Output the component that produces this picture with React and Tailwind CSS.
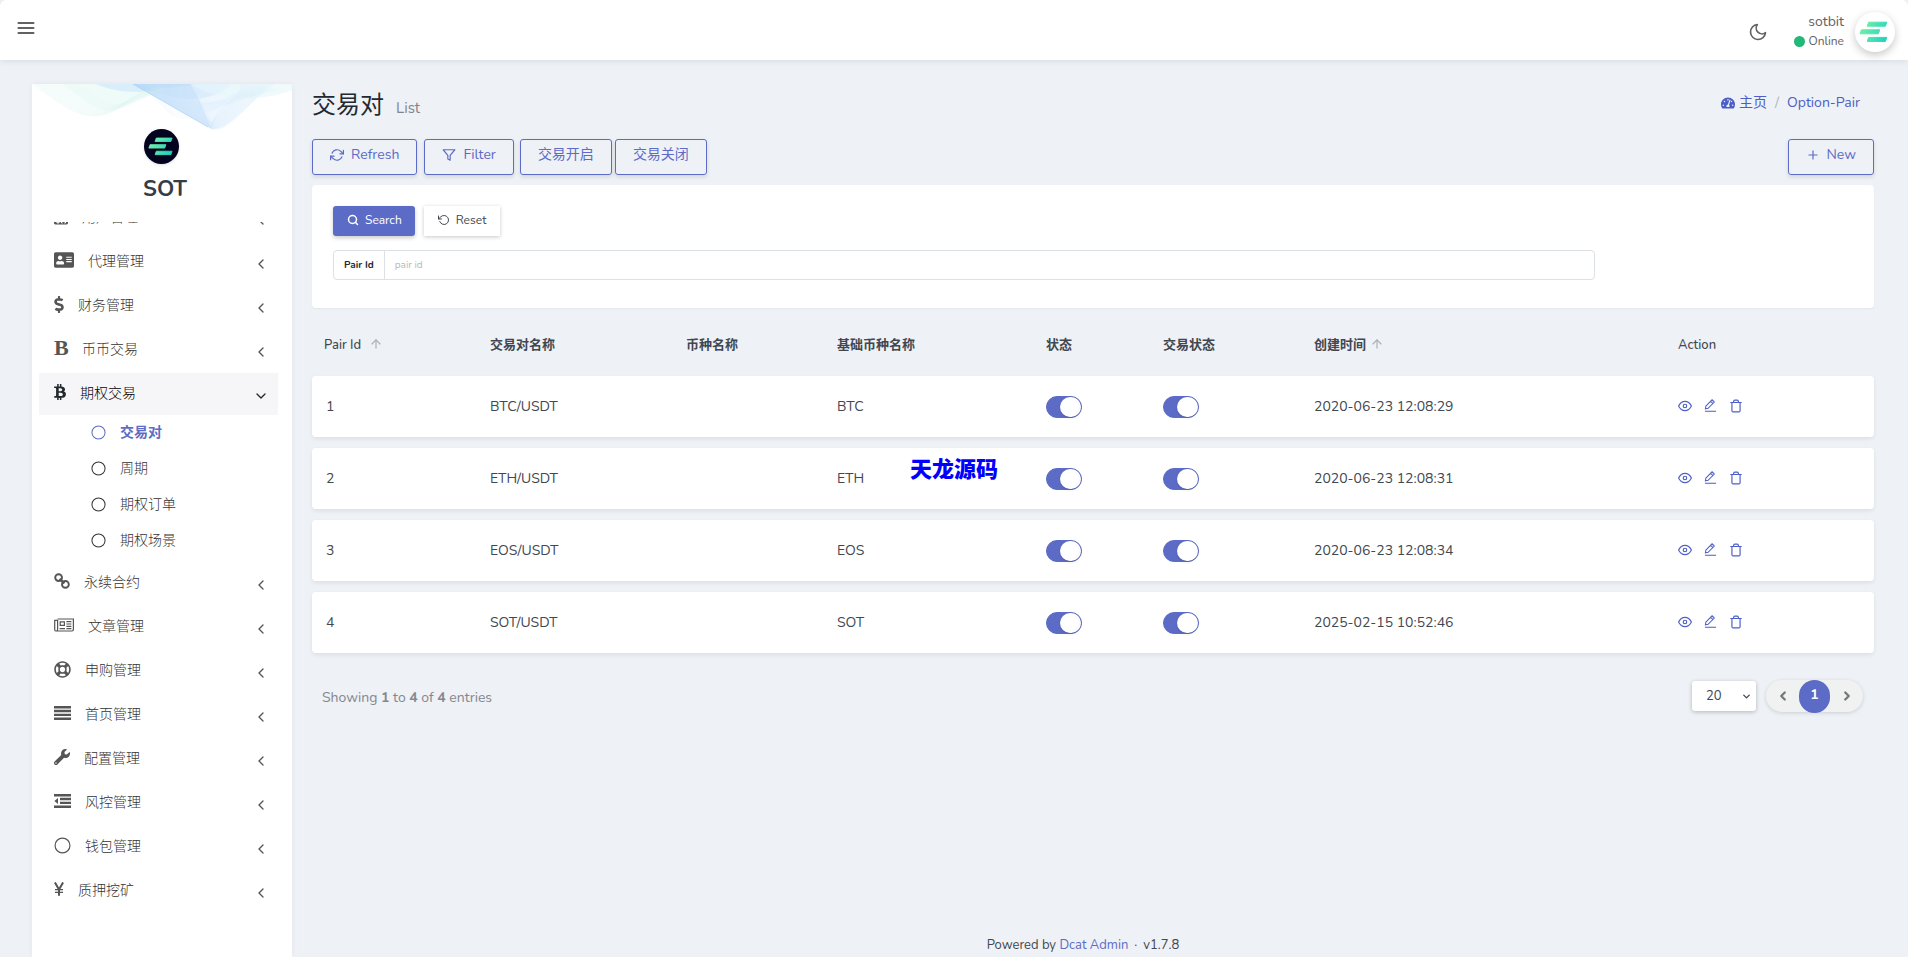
import React, { useState } from 'react'
import { FaAddressCard, FaBtc, FaDollarSign, FaRegLifeRing, FaTachometerAlt, FaUserMd, FaWrench } from 'react-icons/fa'
import {
  FiArrowUp,
  FiChevronDown,
  FiChevronLeft,
  FiChevronRight,
  FiEye,
  FiFilter,
  FiMenu,
  FiMoon,
  FiPlus,
  FiRefreshCw,
  FiRotateCcw,
  FiSearch,
  FiTrash,
} from 'react-icons/fi'

const CircleIcon = ({ className }) => (
  <svg viewBox="0 0 16 16" className={className} fill="none" stroke="currentColor" strokeWidth="1.1">
    <circle cx="8" cy="8" r="7" />
  </svg>
)

const ChainIcon = ({ className }) => (
  <svg viewBox="0 0 16 16" className={className} fill="none" stroke="currentColor" strokeWidth="1.9">
    <circle cx="4.6" cy="4.6" r="3.4" />
    <circle cx="11.4" cy="11.4" r="3.4" />
    <path d="M5.6 5.8l4.8 4.6" strokeWidth="2.4" />
  </svg>
)

const NewsIcon = ({ className }) => (
  <svg viewBox="0 0 20 14" className={className} fill="none" stroke="currentColor" strokeWidth="1.2">
    <path d="M3.6 1h15.8v10.6q0 1.4-1.4 1.4H2.2Q.7 13 .7 11.4V2.4h2.9v9q0 1.6-1.4 1.6" />
    <path d="M6.2 3.8h4.2v3.6H6.2z" />
    <path d="M12.4 3.6h5M12.4 6h5M12.4 8.4h5M5.6 10.6h5.4M12.4 10.6h5" />
  </svg>
)

const JustifyIcon = ({ className }) => (
  <svg viewBox="0 0 17 14" className={className} fill="currentColor">
    <path d="M0 0h17v2.4H0zM0 3.8h17v2.4H0zM0 7.7h17v2.4H0zM0 11.6h17V14H0z" />
  </svg>
)

const DedentIcon = ({ className }) => (
  <svg viewBox="0 0 17 14" className={className} fill="currentColor">
    <path d="M0 0h17v2.4H0zM6 3.8h11v2.4H6zM6 7.7h11v2.4H6zM0 11.6h17V14H0zM4 3.9V10L.4 7z" />
  </svg>
)

const YenIcon = ({ className }) => (
  <svg viewBox="0 0 10 14" className={className} fill="none" stroke="currentColor">
    <path d="M.9.4L5 7.4 9.1.4M5 7v6.8" strokeWidth="2" />
    <path d="M1 7.7h8M1 10.3h8" strokeWidth="1.2" />
  </svg>
)

const PencilIcon = ({ className }) => (
  <svg viewBox="0 0 14 14" className={className} fill="none" stroke="currentColor" strokeWidth="1.1">
    <path d="M1 13.3h12M2 7.6L8.7.9l2.4 2.4-6.7 6.7-2.9.6zM7.2 2.5l2.3 2.3" />
  </svg>
)

const LogoBars = ({ className }) => (
  <svg viewBox="0 0 30 22" className={className}>
    <defs>
      <linearGradient id="bars" gradientUnits="userSpaceOnUse" x1="0" y1="4" x2="30" y2="20">
        <stop offset="0" stopColor="#7ff0a4" />
        <stop offset="1" stopColor="#14d0c0" />
      </linearGradient>
    </defs>
    <g fill="url(#bars)" stroke="url(#bars)" strokeLinejoin="round">
      <path d="M9.6 1.2h18.2l-1.4 4H8.2z" />
      <path d="M2.4 8.8h18.3l-1.4 4H1z" />
      <path d="M9.6 16.4h18.2l-1.4 4H8.2z" />
    </g>
  </svg>
)

const steps = [0, 1, 2, 3, 4, 5, 6, 7, 8, 9, 10, 11]

const Waves = () => (
  <svg viewBox="0 0 260 48" className="w-full block" fill="none">
    <defs>
      <linearGradient id="sky" x1="0" x2="1">
        <stop offset="0" stopColor="#a3cdf6" />
        <stop offset="0.5" stopColor="#d8ebfc" />
        <stop offset="1" stopColor="#ecf8fc" />
      </linearGradient>
    </defs>
    <path d="M0 0C22 14 40 32 62 32C84 32 96 10 128 6L100 0z" fill="#e6faf4" opacity="0.3" />
    <path d="M30 0C48 12 62 27 78 26C96 25 110 12 132 8L104 0z" fill="#e0f7f3" opacity="0.35" />
    <path d="M64 0C84 9 112 10 128 5L172 0z" fill="#cfe8fb" opacity="0.7" />
    <path d="M101 0L176 43C181 47 188 46 194 42C212 30 226 10 242 0z" fill="url(#sky)" opacity="0.5" />
    <path d="M101 0L180 45C172 30 168 12 158 0z" fill="#a9d0f6" opacity="0.25" />
    <path d="M110 0C142 20 178 20 200 0z" fill="#bfdff9" opacity="0.35" />
    <path d="M158 0C190 20 236 16 260 6V0z" fill="#e6f7fa" opacity="0.6" />
    <path d="M101 0L176 43" stroke="#9cc8f4" strokeWidth="0.8" opacity="0.7" />
    {steps.map((i) => (
      <g key={i} strokeWidth="0.35" opacity="0.4">
        <path d={`M${i * 4} 0C${22 + i * 4} 14 ${40 + i * 3} ${32 - i} ${62 + i * 2} ${32 - i}S${100 + i} ${12 - i} 132 ${7 - i / 3}`} stroke="#d2f3ec" />
        <path d={`M${101 + i * 5} 0L180 ${45 - i / 2}C${196 - i} ${44 - i * 2} ${224 - i} 12 ${242 - i * 3} 0`} stroke="#b3d7f8" />
        <path d={`M${116 + i * 2} ${8 + i * 2}C160 ${22 + i * 2} 190 ${26 - i} ${214 + i * 3} ${i / 2}`} stroke="#cfe8fb" />
      </g>
    ))}
  </svg>
)

const menu = [
  { title: '用户管理', icon: <FaUserMd className="h-[17px] w-[14px]" /> },
  { title: '代理管理', icon: <FaAddressCard className="h-[18px] w-5" /> },
  { title: '财务管理', icon: <FaDollarSign className="h-[17px] w-[10px]" /> },
  { title: '币币交易', icon: <span className="block w-[14px] font-['Liberation_Serif',serif] text-[22px] leading-4 font-bold">B</span> },
  {
    title: '期权交易',
    icon: <FaBtc className="h-4 w-3" />,
    open: true,
    children: ['交易对', '周期', '期权订单', '期权场景'],
  },
  { title: '永续合约', icon: <ChainIcon className="h-4 w-4" /> },
  { title: '文章管理', icon: <NewsIcon className="h-[14px] w-5" /> },
  { title: '申购管理', icon: <FaRegLifeRing className="h-[17px] w-[17px]" /> },
  { title: '首页管理', icon: <JustifyIcon className="h-[14px] w-[17px]" /> },
  { title: '配置管理', icon: <FaWrench className="h-4 w-4" /> },
  { title: '风控管理', icon: <DedentIcon className="h-[14px] w-[17px]" /> },
  { title: '钱包管理', icon: <CircleIcon className="h-[17px] w-[17px]" /> },
  { title: '质押挖矿', icon: <YenIcon className="h-[14px] w-[10px]" /> },
]

const pairs = [
  { id: 1, name: 'BTC/USDT', base: 'BTC', created: '2020-06-23 12:08:29' },
  { id: 2, name: 'ETH/USDT', base: 'ETH', created: '2020-06-23 12:08:31' },
  { id: 3, name: 'EOS/USDT', base: 'EOS', created: '2020-06-23 12:08:34' },
  { id: 4, name: 'SOT/USDT', base: 'SOT', created: '2025-02-15 10:52:46' },
]

function OutlineButton({ icon, children, className = '' }) {
  return (
    <button
      className={`flex h-9 items-center gap-[7px] rounded-[3px] border border-[#5c6bc6] px-[17px] pb-1 text-sm text-[#5c6bc6] shadow-[0_2px_4px_rgba(0,0,0,0.12)] ${className}`}
    >
      {icon}
      {children}
    </button>
  )
}

function Toggle({ label }) {
  const [on, setOn] = useState(true)
  return (
    <input
      type="checkbox"
      aria-label={label}
      checked={on}
      onChange={() => setOn(!on)}
      className="block h-[22px] w-9 cursor-pointer appearance-none rounded-full border border-[#5c6bc6] bg-gray-200 before:block before:h-5 before:w-[21px] before:rounded-full before:bg-white before:shadow checked:bg-[#5c6bc6] checked:before:ml-auto"
    />
  )
}

function Sidebar() {
  return (
    <aside className="mt-6 ml-8 w-[260px] shrink-0 bg-white shadow-[0_0_6px_rgba(0,0,0,0.06)]">
      <div className="relative h-[138px]">
        <Waves />
        <a href="#home" className="absolute inset-x-0 top-[45px] flex flex-col items-center pr-[2px]">
          <span className="flex h-[35px] w-[35px] items-center justify-center rounded-full bg-[#03021f] shadow">
            <LogoBars className="w-[26px]" />
          </span>
          <span className="mt-[9px] pl-2 text-[22px] leading-8 font-bold text-[#343c47]">SOT</span>
        </a>
      </div>
      <nav className="overflow-hidden pr-[14px] pl-[7px]">
        <ul className="-mt-[25px]">
          {menu.map((item) => (
            <li key={item.title} className="mb-[2px]">
              <a
                href="#menu"
                className={`flex h-[42px] items-center pr-[9px] pl-[15px] text-sm font-light ${
                  item.open ? 'bg-[#f6f6f9] text-[#22292f]' : 'text-[#555]'
                }`}
              >
                <span className="pb-1">{item.icon}</span>
                <span className={`ml-[14px] ${item.open ? 'text-black' : 'text-[#333]'}`}>{item.title}</span>
                {item.open ? (
                  <FiChevronDown className="mt-1 ml-auto h-4 w-4" />
                ) : (
                  <FiChevronLeft className="mt-1 ml-auto h-4 w-4" />
                )}
              </a>
              {item.children && (
                <ul className="pb-px">
                  {item.children.map((child, i) => (
                    <li key={child}>
                      <a
                        href="#child"
                        className={`flex h-9 items-center pl-[52px] text-sm ${
                          i === 0 ? 'font-bold text-[#5c6bc6]' : 'font-light text-[#333]'
                        }`}
                      >
                        <CircleIcon className="mb-px h-[15px] w-[15px]" />
                        <span className="ml-[14px]">{child}</span>
                      </a>
                    </li>
                  ))}
                </ul>
              )}
            </li>
          ))}
        </ul>
      </nav>
    </aside>
  )
}

function PairTable() {
  return (
    <table className="mt-[6px] w-full table-fixed border-separate border-spacing-x-0 border-spacing-y-[11px] text-left text-sm text-[#414750]">
      <thead>
        <tr className="h-[40px] text-[13px] [&>th]:px-3 [&>th]:pt-px">
          <th className="w-[166px] font-medium">
            Pair Id <FiArrowUp className="mb-1 ml-1 inline h-[14px] w-[14px] text-[#a9b0b8]" />
          </th>
          <th className="w-[196px] font-bold">交易对名称</th>
          <th className="w-[151px] font-bold">币种名称</th>
          <th className="w-[209px] font-bold">基础币种名称</th>
          <th className="w-[117px] font-bold">状态</th>
          <th className="w-[151px] font-bold">交易状态</th>
          <th className="w-[364px] font-bold">
            创建时间 <FiArrowUp className="mb-1 inline h-[14px] w-[14px] text-[#a9b0b8]" />
          </th>
          <th className="w-[208px] font-medium">Action</th>
        </tr>
      </thead>
      <tbody>
        {pairs.map((pair) => (
          <tr
            key={pair.id}
            className="h-[61px] rounded-[4px] shadow-[0_2px_4px_rgba(0,0,0,0.08)] [&>td]:bg-white [&>td]:px-3 [&>td:first-child]:rounded-l-[4px] [&>td:last-child]:rounded-r-[4px]"
          >
            <td>
              <span className="pl-[2px]">{pair.id}</span>
            </td>
            <td>{pair.name}</td>
            <td></td>
            <td>{pair.base}</td>
            <td>
              <Toggle label="状态" />
            </td>
            <td>
              <Toggle label="交易状态" />
            </td>
            <td>{pair.created}</td>
            <td>
              <div className="flex items-center gap-3 pb-[2px] text-[#4c5fc4]">
                <a href="#view" aria-label="View">
                  <FiEye className="h-[14px] w-[14px]" />
                </a>
                <a href="#edit" aria-label="Edit">
                  <PencilIcon className="h-[13px] w-[13px]" />
                </a>
                <a href="#delete" aria-label="Delete">
                  <FiTrash className="h-[14px] w-[14px]" />
                </a>
              </div>
            </td>
          </tr>
        ))}
      </tbody>
    </table>
  )
}

function App() {
  return (
    <div className="relative flex min-h-screen flex-col bg-[#eef1f6] font-[Nunito,Lato,'Noto_Sans_CJK_SC',sans-serif] text-[#414750]">
      {/* Top bar */}
      <header className="flex h-[60px] items-center justify-between rounded-t-md bg-white pr-[13px] pl-4 text-[#626262] shadow-[0_2px_6px_rgba(0,0,0,0.08)]">
        <button aria-label="Toggle menu" className="pb-1">
          <FiMenu className="h-5 w-5" strokeWidth="2.5" />
        </button>
        <div className="flex items-center">
          <button aria-label="Dark mode" className="mt-1 mr-[26px]">
            <FiMoon className="h-5 w-5" />
          </button>
          <div className="flex flex-col items-end pt-[2px]">
            <span className="text-sm leading-5">sotbit</span>
            <span className="flex items-center gap-[3px] text-xs leading-[18px]">
              <i className="h-[11px] w-[11px] rounded-full bg-[#21b978]" />
              Online
            </span>
          </div>
          <a
            href="#profile"
            aria-label="Profile"
            className="mt-1 ml-[11px] flex h-10 w-10 items-center justify-center rounded-full bg-white shadow-[0_3px_8px_rgba(0,0,0,0.22)]"
          >
            <LogoBars className="mr-[3px] w-[30px]" />
          </a>
        </div>
      </header>

      <div className="flex flex-1">
        <Sidebar />

        <main className="flex min-w-0 flex-1 flex-col pt-[27px] pr-[34px] pl-5">
          <div className="flex items-center justify-between">
            <h1 className="flex items-baseline gap-3 text-2xl leading-9 text-[#22292f]">
              交易对 <small className="text-[15px] text-[#818589]">List</small>
            </h1>
            <div className="mr-[14px] mb-2 flex items-center text-sm text-[#4c5fc4]">
              <a href="#home" className="flex items-center gap-1">
                <FaTachometerAlt className="h-[14px] w-[14px]" />
                主页
              </a>
              <span className="mx-2 text-[#b0b5bd]">/</span>
              <a href="#pair">Option-Pair</a>
            </div>
          </div>

          <div className="mt-[13px] flex">
            <OutlineButton icon={<FiRefreshCw className="h-[14px] w-[14px]" />} className="mr-[7px]">
              Refresh
            </OutlineButton>
            <OutlineButton icon={<FiFilter className="h-[14px] w-[14px]" />} className="mr-[6px]">
              Filter
            </OutlineButton>
            <OutlineButton className="mr-[3px]">交易开启</OutlineButton>
            <OutlineButton>交易关闭</OutlineButton>
            <OutlineButton icon={<FiPlus className="h-[14px] w-[14px]" />} className="ml-auto">
              New
            </OutlineButton>
          </div>

          {/* Filter panel */}
          <form className="mt-[10px] rounded-[4px] bg-white px-[21px] pt-[21px] pb-7 shadow-[0_1px_2px_rgba(0,0,0,0.05)]">
            <div className="flex gap-[9px] text-xs">
              <button
                type="button"
                className="flex h-[30px] items-center gap-[6px] rounded-[3px] bg-[#5c6bc6] pr-[13px] pb-[2px] pl-[14px] text-white shadow-[0_2px_4px_rgba(0,0,0,0.2)]"
              >
                <FiSearch className="h-3 w-3" strokeWidth="3" />
                Search
              </button>
              <button
                type="reset"
                className="flex h-[30px] items-center gap-[6px] bg-white px-[14px] pb-[2px] shadow-[0_1px_4px_rgba(0,0,0,0.22)]"
              >
                <FiRotateCcw className="h-3 w-3" />
                Reset
              </button>
            </div>
            <div className="mt-[14px] flex h-[30px] w-[83%] rounded-[4px] border border-[#dbe1e5] text-[10px]">
              <label htmlFor="pair-id" className="flex items-center border-r border-[#dbe1e5] px-[10px] font-bold text-[#22292f]">
                Pair Id
              </label>
              <input id="pair-id" type="text" placeholder="pair id" className="min-w-0 flex-1 px-[10px] outline-none placeholder:text-[#b8b8b8]" />
            </div>
          </form>

          <PairTable />

          <div className="mt-4 flex items-center justify-between pr-[11px] pl-[10px]">
            <p className="pt-[3px] text-sm text-[#83888f]">
              Showing <b>1</b> to <b>4</b> of <b>4</b> entries
            </p>
            <div className="flex items-center gap-[10px]">
              <div className="relative">
                <select
                  aria-label="Entries per page"
                  className="block h-[30px] w-16 appearance-none rounded-[3px] bg-white px-[14px] pt-[2px] text-[13px] shadow-[0_1px_4px_rgba(0,0,0,0.25)] outline-none"
                >
                  <option>20</option>
                  <option>50</option>
                  <option>100</option>
                </select>
                <FiChevronDown className="pointer-events-none absolute top-[10px] right-1 h-[11px] w-[11px]" strokeWidth="3" />
              </div>
              <div className="flex h-8 items-center rounded-full bg-[#f0f1f1] text-[#777] shadow-[0_1px_4px_rgba(0,0,0,0.15)]">
                <button aria-label="Previous page" className="flex w-[33px] justify-center">
                  <FiChevronLeft className="h-[14px] w-[14px]" strokeWidth="4" />
                </button>
                <button className="h-[33px] w-[31px] rounded-full bg-[#5c6bc6] pb-[2px] text-sm font-bold text-white">1</button>
                <button aria-label="Next page" className="flex w-[33px] justify-center">
                  <FiChevronRight className="h-[14px] w-[14px]" strokeWidth="4" />
                </button>
              </div>
            </div>
          </div>

          <footer className="mt-auto pr-5 pb-[2px] text-center text-[13px] leading-5">
            Powered by{' '}
            <a href="#dcat" className="text-[#5c6bc6]">
              Dcat Admin
            </a>
            <span className="mx-[6px]">·</span>v1.7.8
          </footer>
        </main>
      </div>

      <div className="pointer-events-none absolute top-[454px] left-[910px] text-[22px] leading-8 font-black text-[#0000ff]">
        天龙源码
      </div>
    </div>
  )
}

export default App
